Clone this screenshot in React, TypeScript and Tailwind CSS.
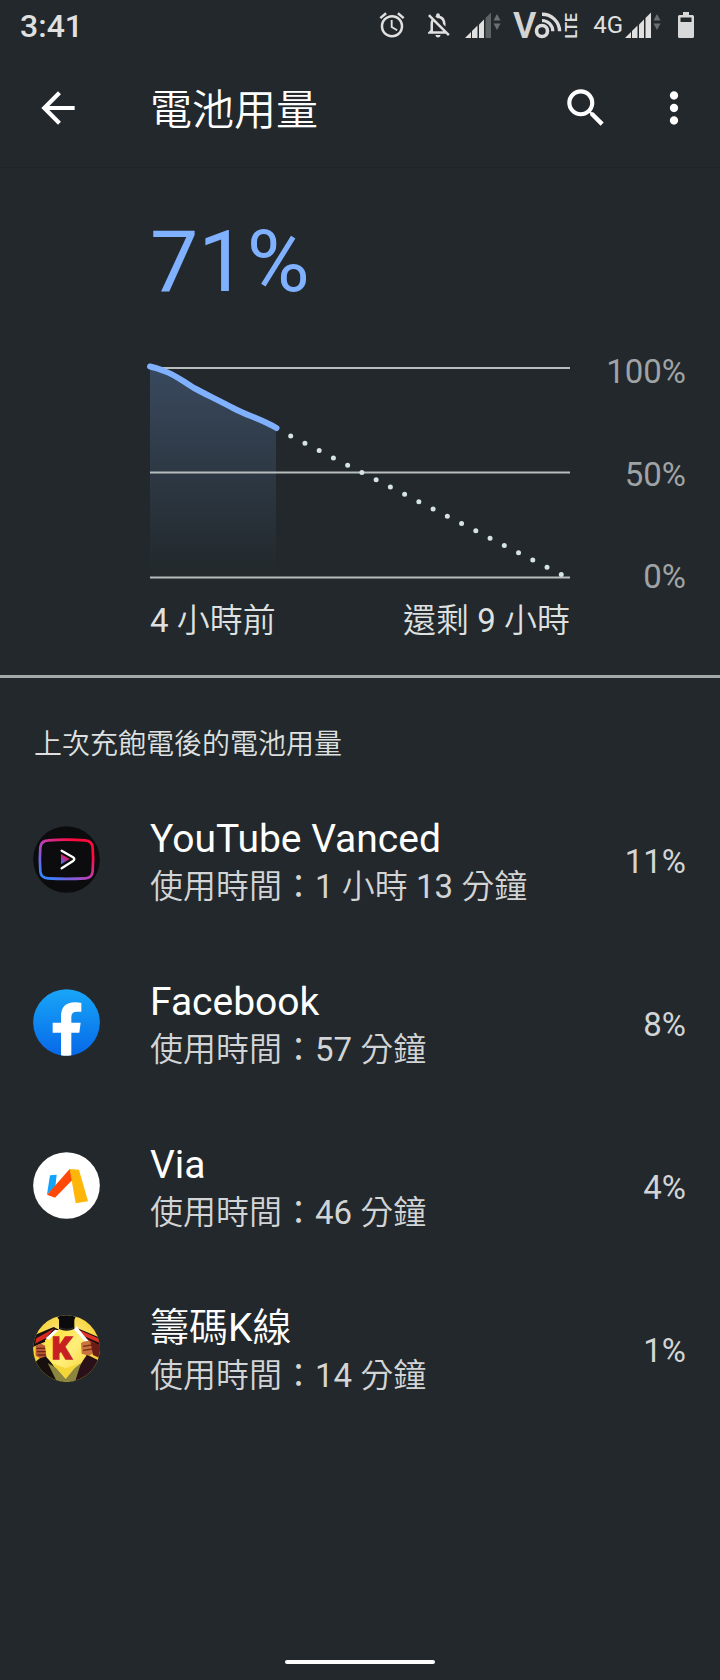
import React from "react";
import { MdAlarm, MdArrowBack, MdMoreVert, MdOutlineNotificationsOff, MdSearch } from "react-icons/md";

function Signal({ full }: { full: boolean }) {
  return (
    <svg width="36" height="26" viewBox="0 0 36 26" aria-hidden="true">
      <g fill="#e0e0e0">
        <path d="M0 26L6 20V26Z" />
        <path d="M7 19L12.5 13.5V26H7Z" />
        <path d="M14 12.5L19 7.5V26H14Z" />
      </g>
      <path d="M20.5 6L26 0.5V26H20.5Z" fill={full ? "#e0e0e0" : "#5d6265"} />
      <path d="M28.5 8.5L32 2L35.5 8.5ZM28.5 11.5H35.5L32 18Z" fill="#6c7073" />
    </svg>
  );
}

function VoLte() {
  return (
    <svg width="65" height="30" viewBox="0 0 65 30" className="overflow-visible" role="img" aria-label="VoLTE">
      <text x="0" y="28" fontFamily="Roboto, sans-serif" fontWeight="600" fontSize="36" fill="#d4d4d4">V</text>
      <g fill="none" stroke="#dcdcdc">
        <circle cx="29" cy="21" r="5.5" strokeWidth="3.6" />
        <path d="M29 10.5A10.8 10.8 0 0 1 39.8 21.3" strokeWidth="3.2" />
        <path d="M29 4.2A17.4 17.4 0 0 1 46.6 21.3" strokeWidth="3.4" />
      </g>
      <text transform="translate(64 28.5) rotate(-90)" fontFamily="Roboto, sans-serif" fontWeight="600" fontSize="16" fill="#dcdcdc">LTE</text>
    </svg>
  );
}

function StatusBar() {
  return (
    <div className="flex h-[50px] items-center pl-5 pr-[26px] text-[#e0e0e0]">
      <span className="pt-[2px] text-[32px] font-medium leading-[38px]">3:41</span>
      <div className="ml-auto flex items-center">
        <MdAlarm size={30} className="mr-4" />
        <MdOutlineNotificationsOff size={30} className="mr-3" />
        <Signal full={false} />
        <span className="ml-3 mr-[15px]">
          <VoLte />
        </span>
        <span className="mr-[2px] text-[24px] leading-[30px]">4G</span>
        <Signal full />
        <svg width="16" height="26" viewBox="0 0 16 26" className="ml-[17px]" aria-hidden="true">
          <path d="M5 0H11V3H14.5Q16 3 16 4.500V24.500Q16 26 14.500 26H1.500Q0 26 0 24.500V4.500Q0 3 1.500 3H5Z" fill="#d8d8d8" />
          <path d="M2.500 5.500H13.500V10H2.500Z" fill="#22282b" />
        </svg>
      </div>
    </div>
  );
}

function AppBar() {
  return (
    <header className="flex h-[118px] items-center border-b border-[#1e2326] pb-[2px] pl-[33px] pr-[21px] text-white">
      <button type="button" aria-label="返回" className="shrink-0">
        <MdArrowBack size={50} />
      </button>
      <h1 className="ml-[67px] pt-[6px] text-[42px] leading-[50px]">電池用量</h1>
      <button type="button" aria-label="搜尋" className="ml-auto">
        <MdSearch size={50} />
      </button>
      <button type="button" aria-label="更多選項" className="ml-[38px]">
        <MdMoreVert size={50} />
      </button>
    </header>
  );
}

function BatteryChart() {
  return (
    <div className="flex pl-[150px] pr-[34px] text-[33px] leading-[38px]">
      <div className="min-w-0 grow">
        <svg viewBox="0 0 420 214" className="mt-3 block w-full overflow-visible" role="img" aria-label="電池電量圖表">
          <defs>
            <linearGradient id="area" x1="0" y1="0" x2="0" y2="1">
              <stop offset="0" stopColor="#80b1ff" stopOpacity="0.24" />
              <stop offset="1" stopColor="#80b1ff" stopOpacity="0" />
            </linearGradient>
          </defs>
          <path d="M0 2C5 3 9 5 14 7C26 11 32 17 44 24C54 29 68 35 84 44C94 48 112 54 126 64V212H0Z" fill="url(#area)" />
          <path d="M0 3H420M0 107.500H420M0 212.500H420" stroke="#b8bdbe" strokeWidth="2" />
          <path d="M0 1.500C5 2.500 9 4 14 6C26 10 32 16 44 23C54 28.500 68 35 84 43.500C96 50 110 53.500 126.500 63" fill="none" stroke="#80b1ff" strokeWidth="6" strokeLinecap="round" strokeLinejoin="round" />
          <path d="M140.700 71L412 210" stroke="#d5e3e8" strokeWidth="5" strokeLinecap="round" strokeDasharray="0 16" />
        </svg>
        <div className="mt-[23px] flex justify-between text-[#dfe0e0]">
          <span>4 小時前</span>
          <span>還剩 9 小時</span>
        </div>
      </div>
      <div className="flex h-[243px] w-[116px] shrink-0 flex-col justify-between text-right text-[#a0a3a5]">
        <span>100%</span>
        <span>50%</span>
        <span>0%</span>
      </div>
    </div>
  );
}

function VancedIcon() {
  return (
    <svg viewBox="0 0 201 201" className="size-[67px]" aria-hidden="true">
      <defs>
        <linearGradient id="frame" x1="0" y1="1" x2="1" y2="0">
          <stop offset="0.1" stopColor="#3b82ff" />
          <stop offset="0.5" stopColor="#c63ab0" />
          <stop offset="0.8" stopColor="#ff0a3c" />
        </linearGradient>
        <linearGradient id="play" x1="0" y1="1" x2="0.6" y2="0">
          <stop offset="0.1" stopColor="#3b74ff" />
          <stop offset="0.8" stopColor="#e8155a" />
        </linearGradient>
      </defs>
      <circle cx="100.500" cy="100.500" r="100" fill="#0c0c0e" />
      <path d="M45 43Q100 39 156 43Q178 45 179 65Q182 100 179 136Q177 156 157 157Q100 160 45 157Q24 156 22 136Q19 100 22 65Q24 44 45 43Z" fill="none" stroke="url(#frame)" strokeWidth="8" />
      <path d="M84 84L110 99L84 115Z" fill="url(#play)" />
      <path d="M86 74L120 94Q128 99 120 105L86 127" fill="none" stroke="#fff" strokeWidth="7" strokeLinecap="round" />
    </svg>
  );
}

function FacebookIcon() {
  return (
    <svg viewBox="0 0 201 201" className="size-[67px]" aria-hidden="true">
      <defs>
        <linearGradient id="fb" x1="0" y1="0" x2="0" y2="1">
          <stop offset="0" stopColor="#18a6f8" />
          <stop offset="1" stopColor="#0668e8" />
        </linearGradient>
      </defs>
      <circle cx="100.500" cy="100.500" r="100" fill="url(#fb)" />
      <path d="M84 199V131H59V101H84V82Q84 40 126 40Q138 40 145 42V68H132Q115 68 115 84V101H143L139 131H115V199Q100 202 84 199Z" fill="#fff" />
    </svg>
  );
}

function ViaIcon() {
  return (
    <svg viewBox="0 0 201 201" className="size-[67px]" aria-hidden="true">
      <circle cx="100.500" cy="100.500" r="100" fill="#fff" />
      <path d="M51 70L71 68L67 105L42 127Z" fill="#12a4fb" />
      <path d="M42 128L110 51L120 82L66 137Z" fill="#ff4808" />
      <path d="M110 51L138 53L165 148L128 154Z" fill="#ffb60a" />
    </svg>
  );
}

function ChipKIcon() {
  return (
    <svg viewBox="0 0 201 201" className="size-[67px]" aria-hidden="true">
      <defs>
        <clipPath id="disc">
          <circle cx="100.500" cy="100.500" r="100" />
        </clipPath>
        <radialGradient id="glow" cx="0.5" cy="0.4" r="0.6">
          <stop offset="0" stopColor="#fff6a0" />
          <stop offset="1" stopColor="#f5c81c" />
        </radialGradient>
        <linearGradient id="shirt" x1="0" y1="0" x2="1" y2="1">
          <stop offset="0" stopColor="#ffe02e" />
          <stop offset="0.5" stopColor="#ffee7a" />
          <stop offset="1" stopColor="#f6cf2a" />
        </linearGradient>
      </defs>
      <g clipPath="url(#disc)">
        <rect width="201" height="201" fill="url(#glow)" />
        <path d="M0 62L62 36L78 44L58 52L42 78L0 96Z" fill="#17100e" />
        <path d="M10 70L64 40L38 70L6 86Z" fill="#d62a22" />
        <path d="M134 40L201 68V110L160 80L128 48Z" fill="#17100e" />
        <path d="M132 42L201 72V84L150 62Z" fill="#e03226" />
        <path d="M152 66L201 92V104L164 82Z" fill="#b81f1c" />
        <path d="M28 201L8 140L36 116L60 150L92 201H28Z" fill="#17100e" />
        <path d="M172 201L196 136L160 118L142 150L110 201H172Z" fill="#2a1018" />
        <path d="M66 48L36 76L40 126L62 150L98 199L140 150L160 122L164 80L134 48Q100 42 66 48Z" fill="url(#shirt)" />
        <path d="M38 70L66 44L76 46L48 74Z" fill="#fff" />
        <path d="M122 42L132 34L140 46L170 82L158 82Z" fill="#fff" />
        <path d="M44 144L72 160L98 176L126 158L144 144L126 201H72Z" fill="#8c8540" />
        <path d="M56 144L98 192L136 146L98 160Z" fill="#f5d638" />
        <path d="M8 92Q24 82 36 92L40 124L22 130L8 122Z" fill="#b85a34" />
        <path d="M10 100H36M12 110H38M14 120H38" stroke="#6c2416" strokeWidth="4" />
        <path d="M144 84Q162 72 186 84L192 108L168 122L146 116Z" fill="#c8743e" />
        <path d="M150 94L176 90M150 106L178 102" stroke="#7c3018" strokeWidth="4" />
        <path d="M172 78L201 90V130L180 120Z" fill="#6a1c16" />
        <path d="M73 6Q100 -8 128 6L124 14V42Q100 52 78 42V14Z" fill="#0b0b0d" />
        <path d="M78 38Q100 48 124 38" fill="none" stroke="#35302c" strokeWidth="3" />
        <text x="56" y="133" fontFamily="Roboto, sans-serif" fontWeight="900" fontSize="94" fill="#c81f22" stroke="#c81f22" strokeWidth="4">K</text>
      </g>
    </svg>
  );
}

const apps = [
  { name: "YouTube Vanced", time: "1 小時 13 分鐘", percent: "11%", Icon: VancedIcon },
  { name: "Facebook", time: "57 分鐘", percent: "8%", Icon: FacebookIcon },
  { name: "Via", time: "46 分鐘", percent: "4%", Icon: ViaIcon },
  { name: "籌碼K線", time: "14 分鐘", percent: "1%", Icon: ChipKIcon },
];

export default function App() {
  return (
    <div
      lang="zh-Hant"
      className="flex min-h-screen flex-col bg-[#22282b] font-[Roboto,'Noto_Sans_CJK_TC_DemiLight','Noto_Sans_CJK_TC',sans-serif] text-white"
    >
      <StatusBar />
      <AppBar />
      <main>
        <section className="border-b-[3px] border-[#a4a9aa] pb-[35px]">
          <p className="pb-[41px] pl-[150px] pt-[44px] text-[86px] leading-[100px] text-[#80b1ff]">71%</p>
          <BatteryChart />
        </section>
        <section>
          <h2 className="pl-[34px] pt-[46px] text-[28px] leading-[42px] text-[#dfe0e0]">上次充飽電後的電池用量</h2>
          <ul className="mt-3">
            {apps.map(({ name, time, percent, Icon }) => (
              <li key={name} className="flex h-[163px] items-center pl-[33px] pr-[34px]">
                <Icon />
                <div className="ml-[50px] grow pt-[6px]">
                  <h3 className="text-[39px] leading-[48px]">{name}</h3>
                  <p className="text-[33px] leading-[48px] text-[#d3d4d5]">使用時間：{time}</p>
                </div>
                <span className="pt-1 text-[33px] leading-[40px] text-[#d3d4d5]">{percent}</span>
              </li>
            ))}
          </ul>
        </section>
      </main>
      <div className="mx-auto mb-4 mt-auto h-1 w-[150px] rounded-full bg-white" />
    </div>
  );
}
